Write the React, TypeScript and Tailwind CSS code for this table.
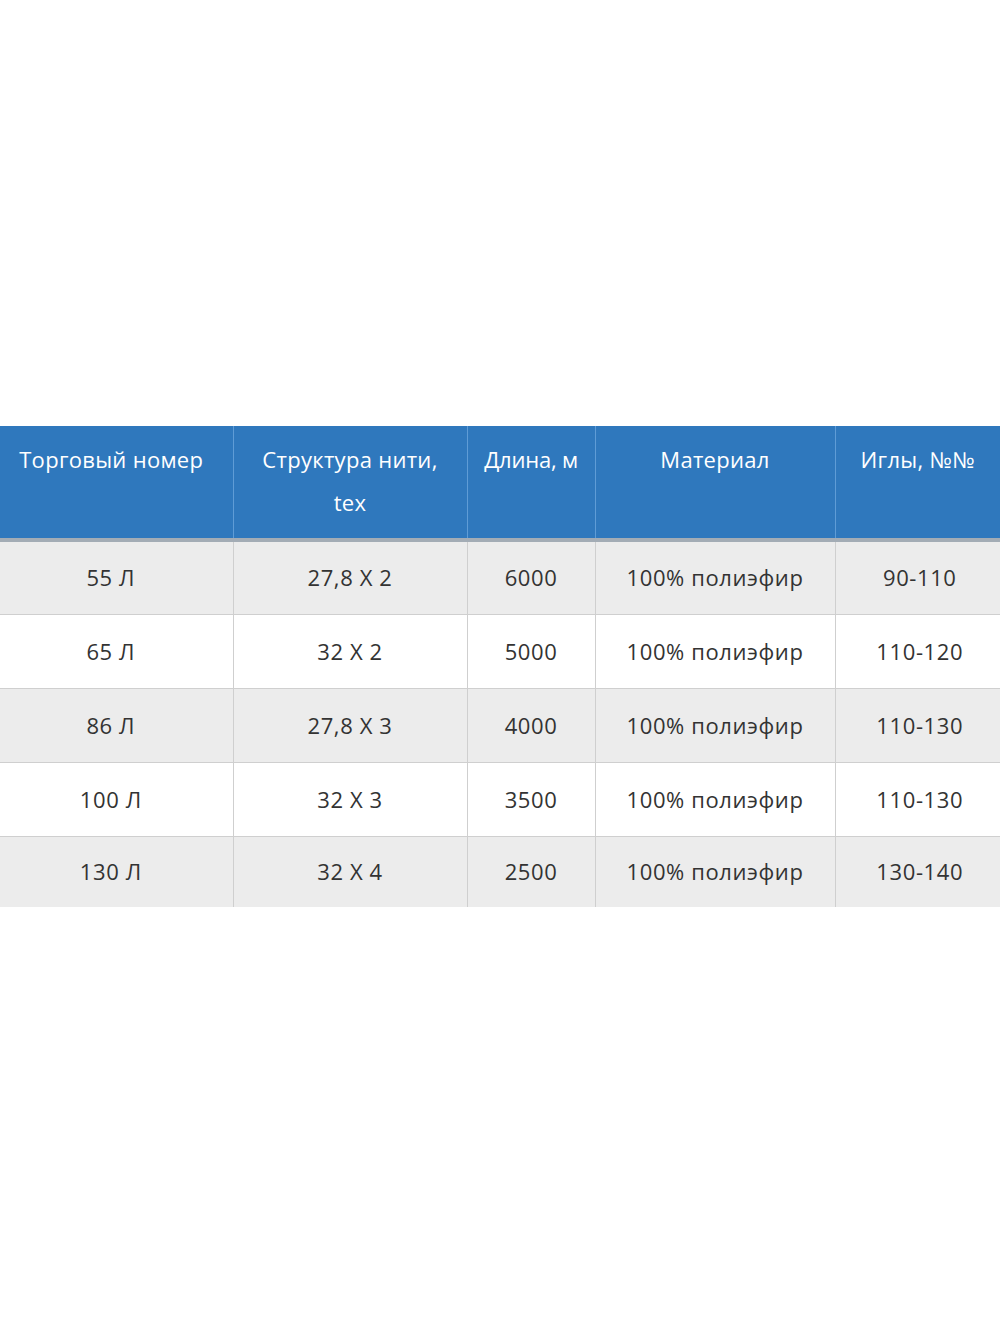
import React from "react";

const rows = [
  ["55 Л", "27,8 X 2", "6000", "100% полиэфир", "90-110"],
  ["65 Л", "32 X 2", "5000", "100% полиэфир", "110-120"],
  ["86 Л", "27,8 X 3", "4000", "100% полиэфир", "110-130"],
  ["100 Л", "32 X 3", "3500", "100% полиэфир", "110-130"],
  ["130 Л", "32 X 4", "2500", "100% полиэфир", "130-140"],
];

const headers = ["Торговый номер", "Структура нити, tex", "Длина, м", "Материал", "Иглы, №№"];
const headerPad = [
  "pl-[4px] pr-[14px] tracking-[0.3px]",
  "px-[22px] tracking-[0.3px]",
  "px-0 whitespace-nowrap tracking-[-0.2px]",
  "px-[22px] tracking-[0.3px]",
  "px-[8px] tracking-[0.3px]",
];

export default function App() {
  return (
    <div className="w-[1000px] h-[1333px] bg-white flex flex-col" style={{ fontFamily: '"Open Sans", "Noto Sans", sans-serif' }}>
      <div className="h-[426px]" />
      <table className="w-[1000px] border-collapse table-fixed">
        <colgroup>
          <col className="w-[233px]" />
          <col className="w-[234px]" />
          <col className="w-[128px]" />
          <col className="w-[240px]" />
          <col className="w-[165px]" />
        </colgroup>
        <thead>
          <tr className="bg-[#2f78bd] h-[114px] border-b-[4px] border-[#a3acb5]">
            {headers.map((h, i) => (
              <th
                key={i}
                className={`align-top pt-[12px] text-white font-normal text-[22px] leading-[43px] ${headerPad[i]} ${i > 0 ? "border-l border-[#5f9cd6]" : ""}`}
              >
                {h}
              </th>
            ))}
          </tr>
        </thead>
        <tbody>
          {rows.map((r, ri) => (
            <tr key={ri} className={`${ri % 2 === 0 ? "bg-[#ececec]" : "bg-white"} ${ri < rows.length - 1 ? "border-b border-[#cfcfcf]" : ""} ${ri === rows.length - 1 ? "h-[71px]" : "h-[74px]"}`}>
              {r.map((c, ci) => (
                <td
                  key={ci}
                  className={`text-center align-middle text-[22px] text-[#333333] tracking-[0.6px] ${ci === 0 ? "pr-[11px]" : ""} ${ci === 4 ? "pl-[4px]" : ""} ${ci > 0 ? "border-l border-[#cfcfcf]" : ""}`}
                >
                  {c}
                </td>
              ))}
            </tr>
          ))}
        </tbody>
      </table>
    </div>
  );
}
